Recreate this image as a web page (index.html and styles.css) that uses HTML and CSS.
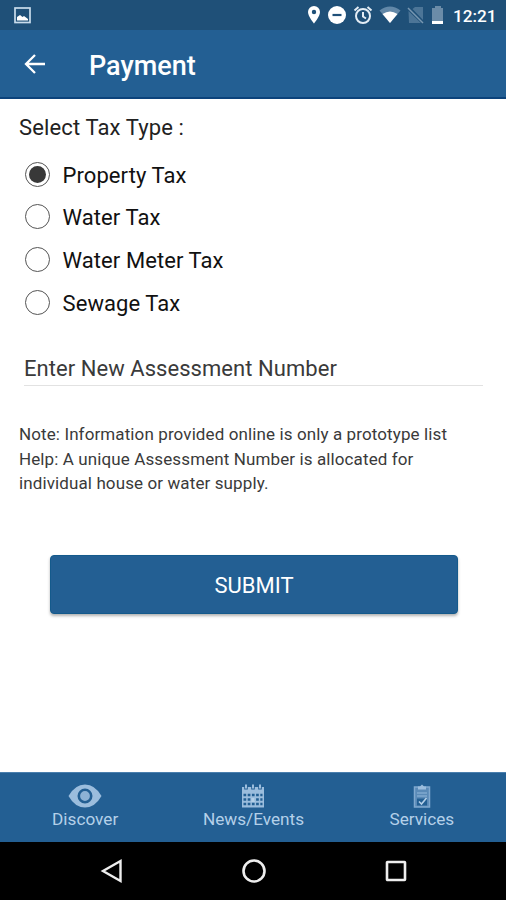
FILE: index.html
```html
<!DOCTYPE html>
<html lang="en">
<head>
<meta charset="utf-8">
<title>Payment</title>
<link rel="stylesheet" href="styles.css">
</head>
<body>
<div class="screen">
  <div class="status">
    <svg class="notice" width="17" height="17" viewBox="0 0 17 17"><rect x="1" y="1" width="15" height="14.5" fill="none" stroke="#c9dcec" stroke-width="1.7"/><path d="M3 13.5V10l3-2 2.500 2 1.500-1 4 3v1.500z" fill="#fff"/></svg>
    <div class="status-icons">
      <svg width="14" height="20" viewBox="0 0 14 20"><path fill="#fff" fill-rule="evenodd" d="M7 1a6 6 0 0 0-6 6c0 4.500 6 11.500 6 11.500S13 11.500 13 7a6 6 0 0 0-6-6zm0 3.800a2.200 2.200 0 1 1 0 4.400 2.200 2.200 0 0 1 0-4.400z"/></svg>
      <svg width="20" height="20" viewBox="0 0 20 20"><circle cx="10" cy="10" r="9" fill="#fff"/><path d="M5.500 10h9" stroke="#1f5079" stroke-width="2.200"/></svg>
      <svg width="20" height="20" viewBox="0 0 20 20"><g fill="none" stroke="#e4edf5" stroke-width="2"><circle cx="10" cy="11" r="7"/><path d="M1.500 5.500l4-3.500M18.500 5.500l-4-3.500M10 7v4.500l3 2"/></g></svg>
      <svg width="22" height="20" viewBox="0 0 22 20"><path d="M.5 5.500Q11-2.500 21.500 5.500L11 18z" fill="#6288a8"/><path d="M3.500 9Q11 4 18.500 9L11 18z" fill="#fff"/></svg>
      <svg width="17" height="20" viewBox="0 0 17 20"><path d="M5.500 4L8 2h8v13zM1.500 6L14 18H2z" fill="#4c7597"/><path d="M1 3l15 15" stroke="#7897b1" stroke-width="1.500"/></svg>
      <svg class="battery" width="14" height="20" viewBox="0 0 14 20"><path d="M4 1h6v2h2v16H1V3h3z" fill="#6b8ca8"/><path d="M1 16h11v3H1z" fill="#fff"/></svg>
    </div>
    <span class="clock">12:21</span>
  </div>
  <header class="appbar">
    <svg class="back" width="22" height="22" viewBox="0 0 22 22"><path d="M21 11H2.500M11 2L2 11l9 9" fill="none" stroke="#fff" stroke-width="2.300"/></svg>
    <h1>Payment</h1>
  </header>
  <main>
    <p class="legend">Select Tax Type :</p>
    <div class="options">
      <label class="option"><span class="radio on"></span><span>Property Tax</span></label>
      <label class="option"><span class="radio"></span><span>Water Tax</span></label>
      <label class="option"><span class="radio"></span><span>Water Meter Tax</span></label>
      <label class="option"><span class="radio"></span><span>Sewage Tax</span></label>
    </div>
    <div class="field"><span>Enter New Assessment Number</span></div>
    <p class="note"><span>Note: Information provided online is only a prototype list</span><br><span>Help: A unique Assessment Number is allocated for</span><br><span>individual house or water supply.</span></p>
    <div class="submit"><span>SUBMIT</span></div>
  </main>
  <nav class="tabs">
    <div class="tab">
      <svg width="34" height="24" viewBox="0 0 34 24"><path d="M.5 12Q7 .5 17 .5T33.500 12Q27 23.500 17 23.500T.5 12z" fill="#9bbddd"/><circle cx="17" cy="12" r="6.200" fill="#8db2d5" stroke="#235f93" stroke-width="2.600"/></svg>
      <span>Discover</span>
    </div>
    <div class="tab">
      <svg width="24" height="24" viewBox="0 0 24 24"><path d="M1 3h22v20.500H1z" fill="#9bbddd"/><path d="M5 1.500v4M12 1.500v4M19 1.500v4" stroke="#235f93" stroke-width="3.600"/><path d="M5 .5v4M12 .5v4M19 .5v4" stroke="#9bbddd" stroke-width="2"/><g stroke="#235f93" stroke-width="2.500" stroke-dasharray="2.700 1.500"><path d="M2.500 11h19M2.500 15.500h19M2.500 20h19"/></g><path d="M10.300 14h3.500v4h-3.500z" fill="#b5d0e8"/></svg>
      <span>News/Events</span>
    </div>
    <div class="tab">
      <svg width="18" height="24" viewBox="0 0 18 24"><path d="M1.500 3h15v20h-15z" fill="#5a8ab7" stroke="#80a9cf" stroke-width="1.500"/><path d="M5 2.500h2L9 .5l2 2h2v3H5z" fill="#9bbddd"/><path d="M4 9h10M4 12h10" stroke="#80a9cf" stroke-width="1.300"/><path d="M4 14.500h10v7H4z" fill="#235f93"/><path d="M6 17.500l2.500 2.500 5-6" fill="none" stroke="#b5d0e8" stroke-width="1.600"/></svg>
      <span>Services</span>
    </div>
  </nav>
  <div class="sysnav">
    <svg width="24" height="26" viewBox="0 0 24 26"><path d="M20.500 3v20L3 13z" fill="none" stroke="#eee" stroke-width="2.400"/></svg>
    <svg width="26" height="26" viewBox="0 0 26 26"><circle cx="13" cy="13" r="10.500" fill="none" stroke="#eee" stroke-width="2.600"/></svg>
    <svg width="24" height="26" viewBox="0 0 24 26"><rect x="3" y="4" width="18" height="18" rx=".5" fill="none" stroke="#eee" stroke-width="2.600"/></svg>
  </div>
</div>
</body>
</html>
```
FILE: styles.css
```css
* { box-sizing: border-box; }
body { margin: 0; background: #fff; font-family: Roboto, "Liberation Sans", sans-serif; color: #222; }
h1, p { margin: 0; font-weight: 400; }
svg { display: block; flex: none; }
span { white-space: nowrap; }
.screen { width: 506px; height: 900px; display: flex; flex-direction: column; overflow: hidden; }
.status { height: 30px; flex: none; background: #1f5078; display: flex; align-items: center; padding: 0 10px 0 14px; }
.status-icons { display: flex; align-items: center; gap: 6px; margin-left: auto; }
.battery { margin-left: 1px; }
.clock { width: 43px; margin-left: 8px; padding-top: 2px; color: #fff; font-size: 17.200px; font-weight: 500; line-height: 20px; }
.appbar { height: 69px; flex: none; background: #235f93; border-bottom: 2px solid #0c437b; display: flex; align-items: center; padding-left: 24px; }
.appbar h1 { margin-left: 43px; padding-top: 4px; color: #fff; font-size: 27px; line-height: 32px; font-weight: 500; }
main { flex: 1; display: flex; flex-direction: column; min-height: 0; }
.legend { margin: 15px 0 0 19px; font-size: 22px; line-height: 28px; letter-spacing: .13px; }
.options { margin: 11px 0 0 25px; }
.option { display: flex; align-items: center; height: 42.600px; gap: 12.500px; font-size: 22px; letter-spacing: .08px; color: #111; }
.option span:last-child { padding-top: 2px; }
.radio { width: 25px; height: 25px; flex: none; border: 1.500px solid #555; border-radius: 50%; display: flex; align-items: center; justify-content: center; }
.on::after { content: ""; width: 17px; height: 17px; border-radius: 50%; background: #383838; }
.field { margin: 31px 23px 0 24px; height: 32px; border-bottom: 1px solid #e2e2e2; font-size: 22px; line-height: 28px; padding-top: 1px; letter-spacing: .05px; color: #3a3a3a; }
.note { margin: 36px 0 0 19px; font-size: 17px; letter-spacing: .11px; line-height: 24.200px; color: #3a3a3a; }
.submit { margin: 60px 48px 0 50px; height: 59px; flex: none; border-radius: 4px; border: 1px solid #145a8c; background: #235f93; box-shadow: 0 2px 3px rgba(0,0,0,.3); color: #fff; font-size: 22px; display: flex; align-items: center; justify-content: center; padding-top: 2px; }
.tabs { height: 70px; flex: none; background: #235f93; border-top: 1px solid #4a7fae; display: grid; grid-template-columns: repeat(3, 1fr); padding-left: 1px; }
.tab { display: flex; flex-direction: column; align-items: center; padding-top: 11px; color: #b4d0e9; font-size: 17.200px; line-height: 23px; }
.sysnav { height: 58px; flex: none; background: #000; display: flex; justify-content: space-between; align-items: center; padding: 0 98px 0 100px; }
```
